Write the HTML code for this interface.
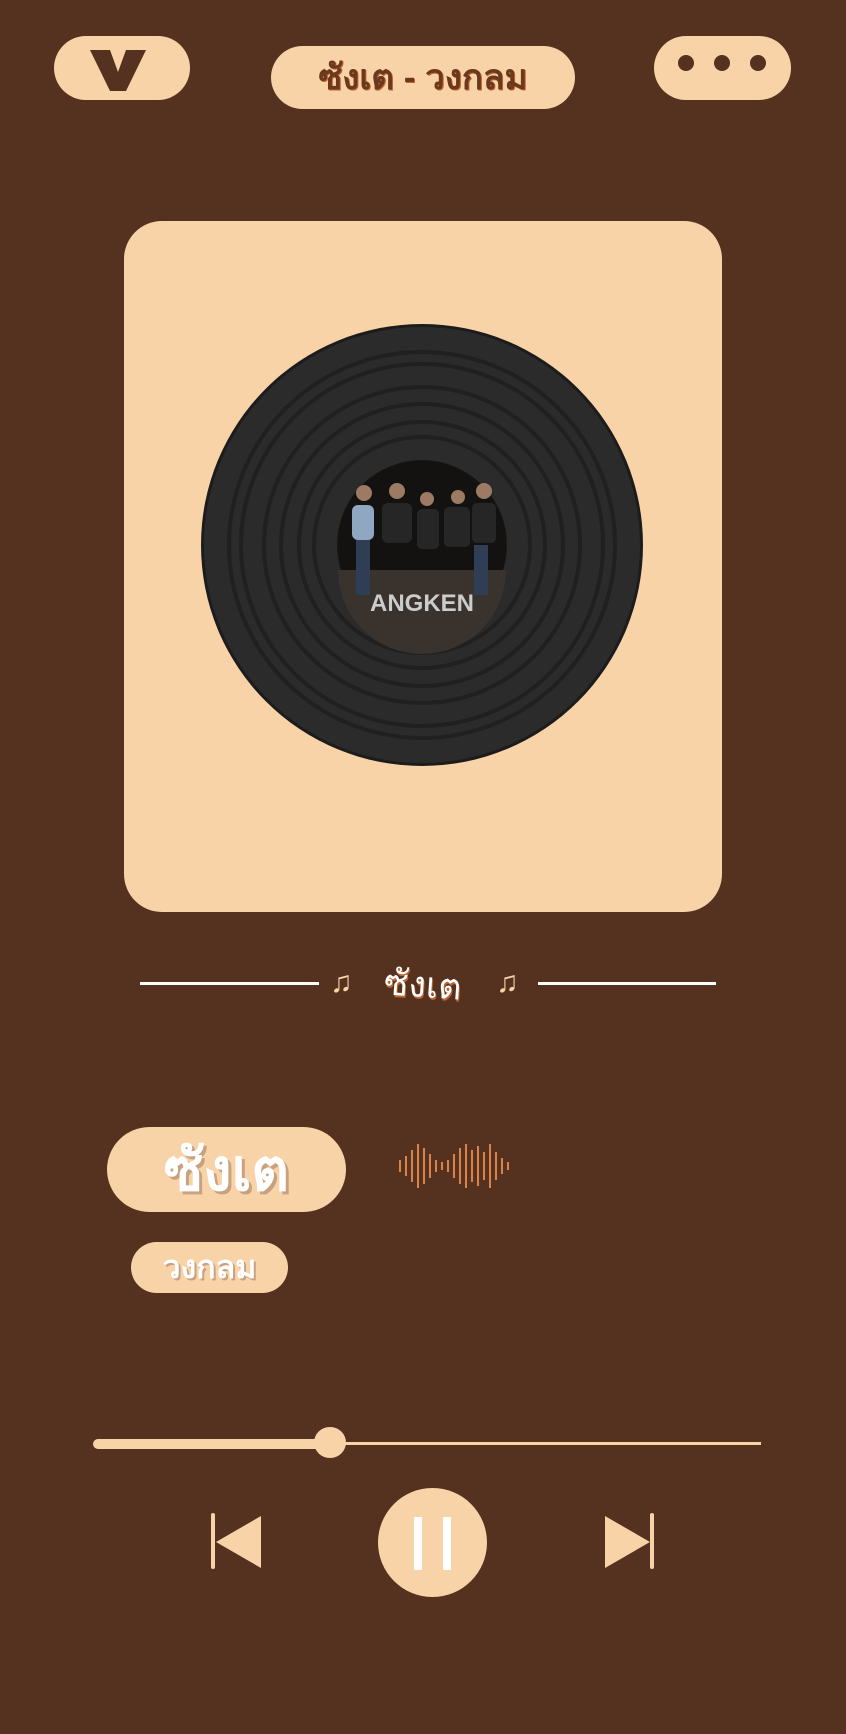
<!DOCTYPE html>
<html><head><meta charset="utf-8"><style>
html,body{margin:0;padding:0}
body{width:846px;height:1734px;background:#55311f;position:relative;overflow:hidden;font-family:"Liberation Sans","DejaVu Sans",sans-serif}
.pill{position:absolute;background:#f9d3a8;border-radius:40px}
.abs{position:absolute}
</style></head><body>
<div class="pill" style="left:54px;top:36px;width:136px;height:64px"></div>
<svg class="abs" style="left:88px;top:48px" width="60" height="44"><polygon points="2,2 22,2 30,24 38,2 58,2 38,43 22,43" fill="#55311f"/></svg>
<div class="pill" style="left:271px;top:46px;width:304px;height:63px;display:flex;align-items:center;justify-content:center;font-size:35px;font-weight:bold;color:#6b3a1e;text-shadow:1px 1px 0 #c0652d">ซังเต - วงกลม</div>
<div class="pill" style="left:654px;top:36px;width:137px;height:64px"></div>
<div class="abs" style="left:678px;top:55px;width:16px;height:16px;border-radius:50%;background:#55311f"></div>
<div class="abs" style="left:714px;top:55px;width:16px;height:16px;border-radius:50%;background:#55311f"></div>
<div class="abs" style="left:750px;top:55px;width:16px;height:16px;border-radius:50%;background:#55311f"></div>

<div class="abs" style="left:124px;top:221px;width:598px;height:691px;background:#f9d3a8;border-radius:38px"></div>
<svg class="abs" style="left:200px;top:323px" width="444" height="444" viewBox="-222 -222 444 444">
<circle r="221" fill="#1c1c1c"/><circle r="218" fill="#2b2b2b"/>
<g fill="none" stroke="#202020" stroke-width="4">
<circle r="193"/><circle r="181"/><circle r="158"/><circle r="141"/><circle r="123"/><circle r="108"/></g>
<circle r="85" fill="#151515"/>
<circle r="84" fill="#141210"/>
<path d="M-84,25 L84,25 A84,84 0 0 1 -84,25Z" fill="#3a332d"/>
<g fill="#8fa7c0"><rect x="-70" y="-40" width="22" height="35" rx="6"/></g>
<g fill="#262626"><rect x="-40" y="-42" width="30" height="40" rx="6"/><rect x="-5" y="-36" width="22" height="40" rx="5"/><rect x="22" y="-38" width="26" height="40" rx="5"/><rect x="50" y="-42" width="24" height="40" rx="5"/></g>
<g fill="#2f3d55"><rect x="-66" y="-5" width="14" height="55"/><rect x="52" y="0" width="14" height="50"/></g>
<g fill="#9c7a64"><circle cx="-58" cy="-52" r="8"/><circle cx="-25" cy="-54" r="8"/><circle cx="5" cy="-46" r="7"/><circle cx="36" cy="-48" r="7"/><circle cx="62" cy="-54" r="8"/></g>
<text x="0" y="66" text-anchor="middle" font-size="24" font-weight="bold" fill="#ccc" font-family="Liberation Sans">ANGKEN</text>
</svg>

<div class="abs" style="left:140px;top:982px;width:179px;height:3px;background:#fff"></div>
<div class="abs" style="left:538px;top:982px;width:178px;height:3px;background:#fff"></div>
<div class="abs" style="left:330px;top:966px;font-size:30px;color:#f9d3a8">♫</div>
<div class="abs" style="left:496px;top:966px;font-size:30px;color:#f9d3a8">♫</div>
<div class="abs" style="left:384px;top:956px;font-size:36px;color:#fff;text-shadow:1px 2px 0 #c0652d;transform:rotate(4deg)">ซังเต</div>

<div class="pill" style="left:107px;top:1127px;width:239px;height:85px;border-radius:43px;display:flex;align-items:center;justify-content:center;font-size:58px;font-weight:bold;color:#fff;text-shadow:3px 3px 0 #c9a080">ซังเต</div>
<svg class="abs" style="left:398px;top:1140px" width="112" height="52"><g stroke="#d9834a" stroke-width="2">
<line x1="2" y1="20" x2="2" y2="32"/><line x1="8" y1="16" x2="8" y2="36"/><line x1="14" y1="10" x2="14" y2="42"/><line x1="20" y1="4" x2="20" y2="48"/><line x1="26" y1="8" x2="26" y2="44"/><line x1="32" y1="14" x2="32" y2="38"/><line x1="38" y1="20" x2="38" y2="32"/><line x1="44" y1="22" x2="44" y2="30"/><line x1="50" y1="20" x2="50" y2="32"/><line x1="56" y1="14" x2="56" y2="38"/><line x1="62" y1="8" x2="62" y2="44"/><line x1="68" y1="4" x2="68" y2="48"/><line x1="74" y1="10" x2="74" y2="42"/><line x1="80" y1="6" x2="80" y2="46"/><line x1="86" y1="12" x2="86" y2="40"/><line x1="92" y1="4" x2="92" y2="48"/><line x1="98" y1="12" x2="98" y2="40"/><line x1="104" y1="18" x2="104" y2="34"/><line x1="110" y1="22" x2="110" y2="30"/></g></svg>
<div class="pill" style="left:131px;top:1242px;width:157px;height:51px;border-radius:26px;display:flex;align-items:center;justify-content:center;font-size:32px;font-weight:bold;color:#fff;text-shadow:2px 2px 0 #c9a080">วงกลม</div>

<div class="abs" style="left:93px;top:1439px;width:240px;height:10px;border-radius:5px;background:#f9d3a8"></div>
<div class="abs" style="left:330px;top:1442px;width:431px;height:3px;background:#f9d3a8"></div>
<div class="abs" style="left:314px;top:1427px;width:32px;height:31px;border-radius:50%;background:#f9d3a8"></div>

<svg class="abs" style="left:208px;top:1510px" width="60" height="64"><rect x="3" y="3" width="4" height="56" rx="2" fill="#f9d3a8"/><polygon points="8,32 53,6 53,58" fill="#f9d3a8"/></svg>
<div class="abs" style="left:378px;top:1488px;width:109px;height:109px;border-radius:50%;background:#f9d3a8"></div>
<div class="abs" style="left:414px;top:1517px;width:8px;height:53px;background:#fff"></div>
<div class="abs" style="left:443px;top:1517px;width:8px;height:53px;background:#fff"></div>
<svg class="abs" style="left:600px;top:1510px" width="60" height="64"><polygon points="5,6 50,32 5,58" fill="#f9d3a8"/><rect x="50" y="3" width="4" height="56" rx="2" fill="#f9d3a8"/></svg>
</body></html>
